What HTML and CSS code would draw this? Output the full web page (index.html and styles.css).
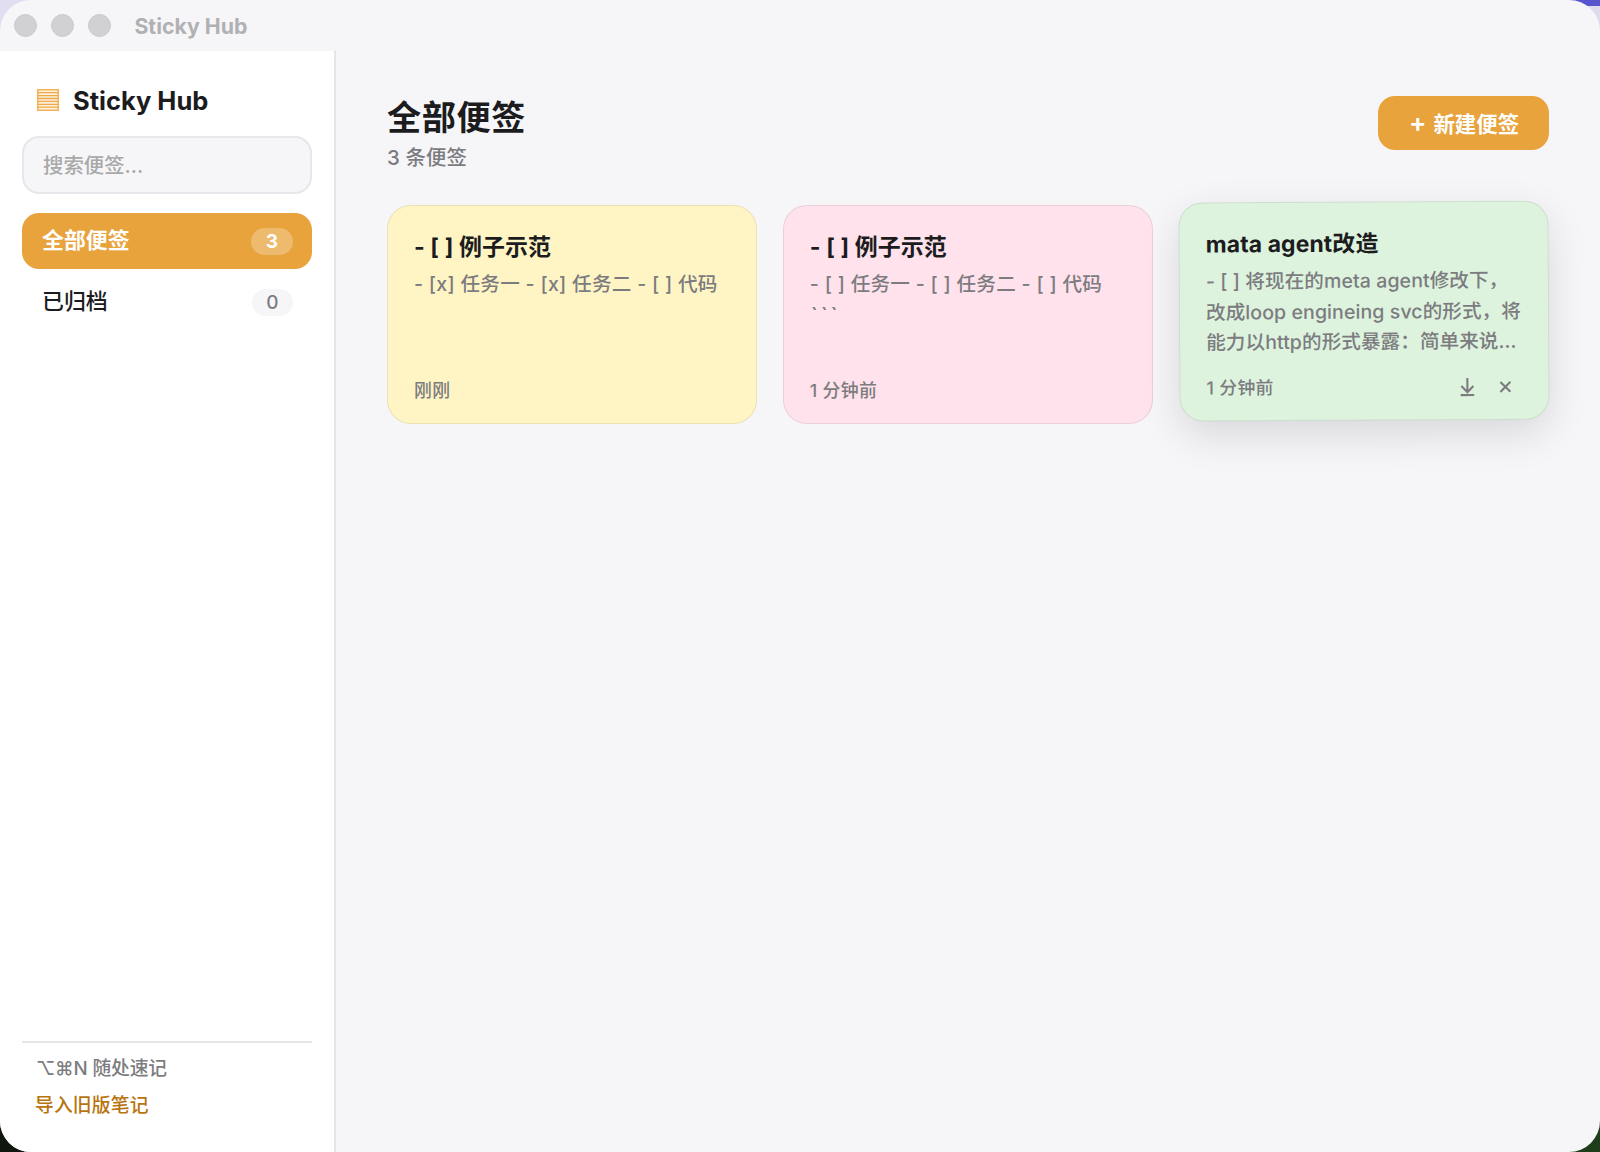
FILE: index.html
```html
<!DOCTYPE html>
<html lang="zh-CN">
<head>
    <meta charset="UTF-8">
    <title>Sticky Hub</title>
    <link rel="stylesheet" href="styles.css">
</head>
<body>
    <div class="window">
        <header class="titlebar">
            <span class="dot"></span>
            <span class="dot"></span>
            <span class="dot"></span>
            <span class="titlebar-text">Sticky Hub</span>
        </header>
        <div class="app">
            <aside class="sidebar">
                <div class="brand">
                    <svg class="brand-icon" width="22" height="22" viewBox="0 0 22 22">
                        <rect x="0.75" y="0.75" width="20.5" height="20.5" fill="#fdf0db" stroke="#efa94a" stroke-width="1.3"/>
                        <path d="M1 3.7h20M1 6.6h20M1 9.5h20M1 12.4h20M1 15.3h20M1 18.2h20" stroke="#efa94a" stroke-width="1.3"/>
                    </svg>
                    <span class="brand-name">Sticky Hub</span>
                </div>
                <input class="search" type="text" placeholder="搜索便签...">
                <nav class="nav">
                    <div class="nav-item active"><span>全部便签</span><span class="count">3</span></div>
                    <div class="nav-item"><span>已归档</span><span class="count">0</span></div>
                </nav>
                <div class="sidebar-footer">
                    <div class="hint">⌥⌘N 随处速记</div>
                    <div class="import">导入旧版笔记</div>
                </div>
            </aside>
            <main class="main">
                <div class="main-header">
                    <div>
                        <h1>全部便签</h1>
                        <p class="subtitle">3 条便签</p>
                    </div>
                    <button class="new-btn"><span class="plus">+</span>新建便签</button>
                </div>
                <div class="grid">
                    <div class="card yellow">
                        <h3>- [ ] 例子示范</h3>
                        <p class="preview tasks">- [x] 任务一 - [x] 任务二 - [ ] 代码</p>
                        <div class="card-footer"><span>刚刚</span></div>
                    </div>
                    <div class="card pink">
                        <h3>- [ ] 例子示范</h3>
                        <p class="preview tasks">- [ ] 任务一 - [ ] 任务二 - [ ] 代码<br><span class="ticks">```</span></p>
                        <div class="card-footer"><span>1 分钟前</span></div>
                    </div>
                    <div class="card green hovered">
                        <h3>mata agent改造</h3>
                        <p class="preview">- [ ] 将现在的meta agent修改下，<br>改成loop engineing svc的形式，将<br>能力以http的形式暴露：简单来说...</p>
                        <div class="card-footer">
                            <span>1 分钟前</span>
                            <span class="actions">
                                <svg width="16" height="20" viewBox="0 0 16 20">
                                    <path d="M8 1v14M2 9l6 6.2L14 9M1.2 18h13.6" fill="none" stroke="#7c7c80" stroke-width="2.1"/>
                                </svg>
                                <svg width="12" height="12" viewBox="0 0 12 12">
                                    <path d="M1 1l10 10M11 1L1 11" fill="none" stroke="#7c7c80" stroke-width="2.1"/>
                                </svg>
                            </span>
                        </div>
                    </div>
                </div>
            </main>
        </div>
    </div>
</body>
</html>
```

FILE: styles.css
```css
* {
    box-sizing: border-box;
}

html {
    height: 100%;
    background: linear-gradient(90deg, #e0def0 50%, transparent 50%) 0 0 / 100% 60px no-repeat,
                linear-gradient(#5655cf 6px, #dcdcec 6px) 0 0 / 100% 60px no-repeat,
                linear-gradient(90deg, #10160c, #1f3d1a);
}

body {
    margin: 0;
    height: 100%;
    font-family: Inter, "Noto Sans CJK SC", sans-serif;
    font-weight: 450;
    color: #1c1c1e;
}

.window {
    height: 1152px;
    display: flex;
    flex-direction: column;
    background: #f6f6f9;
    border-radius: 31px;
    overflow: hidden;
}

.titlebar {
    height: 51px;
    flex: none;
    display: flex;
    align-items: center;
    gap: 13.8px;
    padding-left: 14px;
}

.dot {
    width: 23px;
    height: 23px;
    border-radius: 50%;
    background: #d1d1d3;
    border: 1px solid #cbcbcd;
}

.titlebar-text {
    margin-left: 10px;
    font-size: 21.3px;
    font-weight: 700;
    color: #b1b1b3;
}

.app {
    flex: 1;
    display: flex;
}

.sidebar {
    width: 336px;
    display: flex;
    flex-direction: column;
    padding: 29px 22px 30px;
    background: #fff;
    border-right: 2px solid #e5e5ea;
}

.brand {
    display: flex;
    align-items: center;
    height: 40px;
    padding-left: 15px;
    gap: 14px;
}

.brand-icon {
    margin-top: -1px;
}

.brand-name {
    font-size: 25.5px;
    font-weight: 700;
}

.search {
    height: 58px;
    margin-top: 16px;
    padding: 1px 19px 0;
    border: 2px solid #e7e7eb;
    border-radius: 17px;
    background: #f6f6f9;
    font-family: inherit;
    font-weight: inherit;
    font-size: 20.4px;
}

.search::placeholder {
    color: #a9a9a9;
}

.nav {
    margin-top: 19px;
    display: flex;
    flex-direction: column;
    gap: 5px;
}

.nav-item {
    height: 56px;
    padding: 0 19px 2px 20px;
    display: flex;
    align-items: center;
    justify-content: space-between;
    border-radius: 17px;
    font-size: 21.9px;
    line-height: 28px;
}

.nav-item.active {
    background: #e8a33d;
    color: #fff;
    font-weight: 600;
}

.count {
    width: 41px;
    height: 27px;
    margin-top: 2px;
    border-radius: 14px;
    background: #f6f6f9;
    color: #7c7c80;
    font-size: 19px;
    line-height: 27px;
    text-align: center;
}

.active .count {
    width: 42px;
    background: rgba(255, 255, 255, 0.25);
    color: #fff;
    font-weight: 700;
}

.sidebar-footer {
    margin-top: auto;
    padding: 10px 14px 0;
    border-top: 2px solid #e5e5ea;
    font-size: 18.8px;
    line-height: 32px;
}

.hint {
    color: #7c7c80;
    letter-spacing: -0.15px;
}

.import {
    margin: 5px 0 0 -1px;
    color: #b8740e;
    letter-spacing: 0.15px;
}

.main {
    flex: 1;
    padding: 45px 51px 0;
}

.main-header {
    display: flex;
    justify-content: space-between;
    height: 109px;
}

h1 {
    margin: 1px 0 0;
    font-size: 34.2px;
    line-height: 42px;
    font-weight: 700;
    letter-spacing: 0.6px;
}

.subtitle {
    margin: 4px 0 0;
    font-size: 20.4px;
    line-height: 30px;
    letter-spacing: 0.1px;
    color: #7c7c80;
}

.new-btn {
    width: 171px;
    height: 54px;
    display: flex;
    align-items: center;
    justify-content: center;
    gap: 7px;
    padding: 0 0 2px 1px;
    border: none;
    border-radius: 17px;
    background: #e8a33d;
    color: #fff;
    font-family: inherit;
    font-size: 21.4px;
    font-weight: 600;
}

.plus {
    font-size: 26px;
    font-weight: 600;
}

.grid {
    display: grid;
    grid-template-columns: repeat(3, 1fr);
    gap: 25.5px;
}

.card {
    height: 219px;
    display: flex;
    flex-direction: column;
    padding: 24px 26px 17px;
    border: 1.5px solid rgba(0, 0, 0, 0.08);
    border-radius: 24px;
}

.yellow {
    background-color: #fff5c4;
}

.pink {
    background-color: #ffe2eb;
}

.green {
    background-color: #ddf3de;
}

.hovered {
    transform: translateY(-3.4px) rotate(-0.3deg);
    box-shadow: 0 14px 40px rgba(0, 0, 0, 0.12);
}

.card h3 {
    margin: 0;
    font-size: 22.95px;
    line-height: 34px;
    font-weight: 650;
    letter-spacing: 0.1px;
    white-space: nowrap;
}

.preview {
    margin: 5px 0 0;
    font-size: 19.6px;
    line-height: 30.5px;
    letter-spacing: 0.05px;
    color: #7c7c80;
    white-space: nowrap;
}

.tasks {
    letter-spacing: 0.27px;
}

.ticks {
    margin-left: 1px;
    font-weight: 600;
    letter-spacing: 3px;
}

.card-footer {
    margin-top: auto;
    display: flex;
    align-items: center;
    justify-content: space-between;
    height: 32px;
    padding-bottom: 3px;
    font-size: 17.9px;
    letter-spacing: 0.3px;
    color: #7c7c80;
}

.actions {
    display: flex;
    align-items: center;
    gap: 24px;
    padding: 5px 11px 0 0;
}
```
